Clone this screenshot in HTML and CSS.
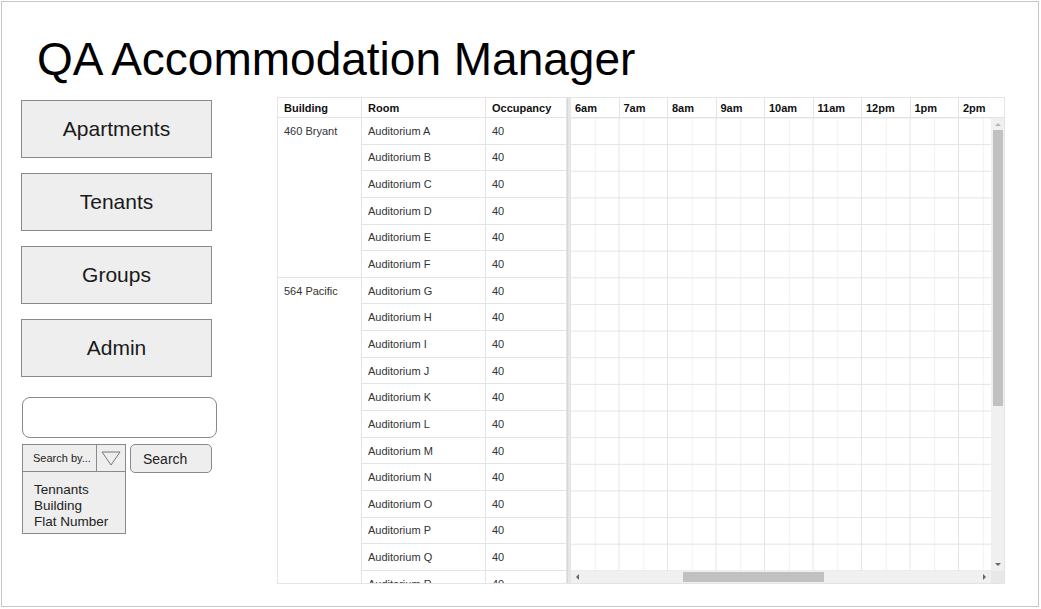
FILE: index.html
```html
<!DOCTYPE html>
<html>
<head>
<meta charset="utf-8">
<link rel="stylesheet" href="styles.css">
</head>
<body>
<div class="frame">
  <h1 class="title">QA Accommodation Manager</h1>
  <div class="main">
    <div class="sidebar">
      <div class="navbtn">Apartments</div>
      <div class="navbtn">Tenants</div>
      <div class="navbtn">Groups</div>
      <div class="navbtn">Admin</div>
      <div class="searchbox"></div>
      <div class="searchrow">
        <div class="dropdown">
          <div class="dd-head">
            <span class="dd-label">Search by...</span>
            <span class="dd-arrow"><svg width="22" height="18" viewBox="0 0 22 18"><path d="M2 3 L20 3 L11 16 Z" fill="none" stroke="#777" stroke-width="1"/></svg></span>
          </div>
          <div class="dd-list">
            <div>Tennants</div>
            <div>Building</div>
            <div>Flat Number</div>
          </div>
        </div>
        <div class="searchbtn">Search</div>
      </div>
    </div>
    <div class="panel">
      <div class="frozen">
        <div class="fz-head">Building</div>
        <div class="fz-head">Room</div>
        <div class="fz-head">Occupancy</div>
        <div class="bld bld1">460 Bryant</div>
        <div class="cell">Auditorium A</div><div class="cell">40</div>
        <div class="cell">Auditorium B</div><div class="cell">40</div>
        <div class="cell">Auditorium C</div><div class="cell">40</div>
        <div class="cell">Auditorium D</div><div class="cell">40</div>
        <div class="cell">Auditorium E</div><div class="cell">40</div>
        <div class="cell">Auditorium F</div><div class="cell">40</div>
        <div class="bld bld2">564 Pacific</div>
        <div class="cell">Auditorium G</div><div class="cell">40</div>
        <div class="cell">Auditorium H</div><div class="cell">40</div>
        <div class="cell">Auditorium I</div><div class="cell">40</div>
        <div class="cell">Auditorium J</div><div class="cell">40</div>
        <div class="cell">Auditorium K</div><div class="cell">40</div>
        <div class="cell">Auditorium L</div><div class="cell">40</div>
        <div class="cell">Auditorium M</div><div class="cell">40</div>
        <div class="cell">Auditorium N</div><div class="cell">40</div>
        <div class="cell">Auditorium O</div><div class="cell">40</div>
        <div class="cell">Auditorium P</div><div class="cell">40</div>
        <div class="cell">Auditorium Q</div><div class="cell">40</div>
        <div class="cell">Auditorium R</div><div class="cell">40</div>
      </div>
      <div class="splitter"></div>
      <div class="timeside">
        <div class="t-head">
          <div class="t-hcell">6am</div>
          <div class="t-hcell">7am</div>
          <div class="t-hcell">8am</div>
          <div class="t-hcell">9am</div>
          <div class="t-hcell">10am</div>
          <div class="t-hcell">11am</div>
          <div class="t-hcell">12pm</div>
          <div class="t-hcell">1pm</div>
          <div class="t-hcell">2pm</div>
        </div>
        <div class="t-body">
          <div class="viewport"></div>
          <div class="vscroll">
            <div class="arrow-up"></div>
            <div class="vthumb"></div>
            <div class="arrow-down"></div>
          </div>
        </div>
        <div class="t-foot">
          <div class="hscroll">
            <div class="arrow-left"></div>
            <div class="htrack"><div class="hthumb"></div></div>
            <div class="arrow-right"></div>
          </div>
          <div class="corner"></div>
        </div>
      </div>
    </div>
  </div>
</div>
</body>
</html>
```

FILE: styles.css
```css
* { box-sizing: border-box; }
html, body { margin: 0; padding: 0; background: #fff; }
body { font-family: "Liberation Sans", Arial, sans-serif; color: #111; }

.frame {
  margin: 1px;
  width: 1038px;
  height: 606px;
  border: 1px solid #c8c8c8;
  position: relative;
  overflow: hidden;
}

.title {
  margin: 0;
  padding: 30px 0 0 35px;
  font-size: 46px;
  font-weight: normal;
  line-height: 54px;
  height: 95px;
  color: #000;
}

.main {
  display: flex;
  align-items: flex-start;
}

.sidebar {
  width: 275px;
  padding: 3px 0 0 19px;
  display: flex;
  flex-direction: column;
}

.navbtn {
  width: 191px;
  height: 58px;
  background: #eeeeee;
  border: 1.5px solid #8a8a8a;
  display: flex;
  align-items: center;
  justify-content: center;
  font-size: 21px;
  color: #1a1a1a;
  margin-bottom: 15px;
}

.searchbox {
  margin-top: 5px;
  margin-left: 1px;
  width: 195px;
  height: 41px;
  border: 1.5px solid #8a8a8a;
  border-radius: 8px;
  background: #fff;
}

.searchrow {
  display: flex;
  align-items: flex-start;
  margin-top: 6px;
  margin-left: 1px;
}

.dropdown { width: 104px; }

.dd-head {
  display: flex;
  height: 28px;
  border: 1.5px solid #8a8a8a;
  background: #eeeeee;
}
.dd-label {
  width: 74px;
  font-size: 11px;
  color: #222;
  display: flex;
  align-items: center;
  padding-left: 10px;
  border-right: 1.5px solid #8a8a8a;
}
.dd-arrow {
  flex: 1;
  display: flex;
  align-items: center;
  justify-content: center;
}
.dd-list {
  border: 1.5px solid #8a8a8a;
  border-top: none;
  background: #eeeeee;
  height: 62px;
  padding: 10px 0 0 11px;
  font-size: 13.5px;
  line-height: 16px;
  color: #222;
}

.searchbtn {
  margin-left: 4px;
  width: 82px;
  height: 29px;
  border: 1.5px solid #8a8a8a;
  border-radius: 5px;
  background: #eeeeee;
  font-size: 14px;
  color: #222;
  display: flex;
  align-items: center;
  padding-left: 12px;
}

/* grid panel */
.panel {
  margin-top: 0;
  display: flex;
  height: 487px;
  border: 1px solid #e4e4e4;
  background: #fff;
  font-size: 11px;
  color: #333;
}

.frozen {
  width: 289px;
  display: grid;
  grid-template-columns: 84px 124px 81px;
  grid-template-rows: 20px repeat(18, 26.65px);
  overflow: hidden;
  align-content: start;
}

.fz-head {
  font-weight: bold;
  color: #111;
  display: flex;
  align-items: center;
  padding-left: 6px;
  border-bottom: 1px solid #e4e4e4;
  border-right: 1px solid #e4e4e4;
}

.bld {
  grid-column: 1;
  padding: 7px 0 0 6px;
  border-right: 1px solid #e4e4e4;
  border-bottom: 1px solid #e4e4e4;
}
.bld1 { grid-row: 2 / span 6; }
.bld2 { grid-row: 8 / span 12; }

.cell {
  display: flex;
  align-items: center;
  padding-left: 6px;
  border-right: 1px solid #e4e4e4;
  border-bottom: 1px solid #e4e4e4;
}

.splitter {
  width: 4px;
  background: #e6e6e6;
  border-left: 1px solid #d8d8d8;
}

.timeside {
  width: 433px;
  display: flex;
  flex-direction: column;
}

.t-head {
  height: 20px;
  display: flex;
  overflow: hidden;
  border-bottom: 1px solid #e4e4e4;
}
.t-hcell {
  flex: 0 0 48.5px;
  font-weight: bold;
  color: #111;
  padding-left: 4px;
  display: flex;
  align-items: center;
  border-right: 1px solid #e4e4e4;
}
.t-hcell:last-child { flex: 0 0 46px; border-right: none; }

.t-body {
  height: 453px;
  display: flex;
}

.viewport {
  width: 420px;
  background-color: #fff;
  background-image:
    linear-gradient(to bottom, #e4e4e4 1px, transparent 1px),
    linear-gradient(to right, #e4e4e4 1px, transparent 1px),
    linear-gradient(to right, transparent 24px, #f1f1f1 24px, #f1f1f1 25px, transparent 25px);
  background-size: 100% 26.65px, 48.5px 100%, 48.5px 100%;
  background-position: 0 26.1px, 47.5px 0, 0 0;
}

.vscroll {
  width: 13px;
  background: #f0f0f0;
  display: flex;
  flex-direction: column;
  align-items: center;
}
.arrow-up {
  margin-top: 5px;
  width: 0; height: 0;
  border-left: 3px solid transparent;
  border-right: 3px solid transparent;
  border-bottom: 3px solid #b5b5b5;
}
.vthumb {
  margin-top: 4px;
  width: 10px;
  height: 276px;
  background: #c1c1c1;
}
.arrow-down {
  margin-top: auto;
  margin-bottom: 5px;
  width: 0; height: 0;
  border-left: 3px solid transparent;
  border-right: 3px solid transparent;
  border-top: 3px solid #666;
}

.t-foot {
  height: 12px;
  display: flex;
}
.hscroll {
  width: 420px;
  background: #f0f0f0;
  display: flex;
  align-items: center;
}
.arrow-left {
  margin-left: 5px;
  width: 0; height: 0;
  border-top: 3px solid transparent;
  border-bottom: 3px solid transparent;
  border-right: 3px solid #666;
}
.htrack {
  flex: 1;
  height: 10px;
  padding-left: 104px;
}
.hthumb {
  width: 141px;
  height: 10px;
  background: #c1c1c1;
}
.arrow-right {
  margin-right: 5px;
  width: 0; height: 0;
  border-top: 3px solid transparent;
  border-bottom: 3px solid transparent;
  border-left: 3px solid #666;
}
.corner {
  width: 13px;
  background: #e8e8e8;
}
```
